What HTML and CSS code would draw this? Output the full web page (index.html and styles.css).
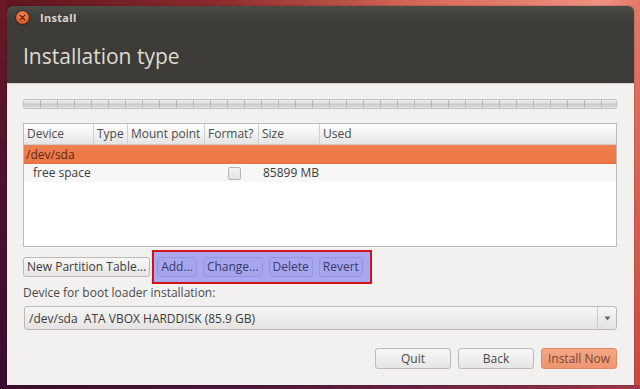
FILE: index.html
```html
<!DOCTYPE html>
<html>
<head>
<meta charset="utf-8">
<link rel="stylesheet" href="styles.css">
</head>
<body>
<div class="window">
  <div class="header">
    <div class="titlebar">
      <span class="close"><svg width="13" height="13" viewBox="0 0 13 13"><path d="M4.3 4.3 L8.7 8.7 M8.7 4.3 L4.3 8.7" stroke="#6b2410" stroke-width="1.4" stroke-linecap="round"/></svg></span>
      <span class="title">Install</span>
    </div>
    <h1 class="heading">Installation type</h1>
  </div>
  <div class="content">
    <div class="diskbar"></div>
    <div class="table">
      <div class="row head">
        <div class="cell">Device</div>
        <div class="cell">Type</div>
        <div class="cell">Mount point</div>
        <div class="cell">Format?</div>
        <div class="cell">Size</div>
        <div class="cell last">Used</div>
      </div>
      <div class="row selected">
        <div class="cell">/dev/sda</div>
        <div class="cell"></div>
        <div class="cell"></div>
        <div class="cell"></div>
        <div class="cell"></div>
        <div class="cell"></div>
      </div>
      <div class="row alt">
        <div class="cell indent">free space</div>
        <div class="cell"></div>
        <div class="cell"></div>
        <div class="cell center"><span class="check"></span></div>
        <div class="cell">85899 MB</div>
        <div class="cell"></div>
      </div>
    </div>
    <div class="actions">
      <button class="btn">New Partition Table...</button>
      <div class="highlight">
        <button class="btn hl">Add...</button>
        <button class="btn hl">Change...</button>
        <button class="btn hl">Delete</button>
        <button class="btn hl">Revert</button>
      </div>
    </div>
    <div class="label">Device for boot loader installation:</div>
    <div class="combo">
      <span class="combo-text">/dev/sda&nbsp; ATA VBOX HARDDISK (85.9 GB)</span>
      <span class="combo-arrow"><svg width="7" height="5" viewBox="0 0 7 5"><path d="M0.5 0.5 L6.5 0.5 L3.5 4.5 Z" fill="#6a6a6a"/></svg></span>
    </div>
    <div class="footer">
      <button class="btn big">Quit</button>
      <button class="btn big">Back</button>
      <button class="btn big primary">Install Now</button>
    </div>
  </div>
</div>
</body>
</html>
```

FILE: styles.css
```css
html, body {
  margin: 0;
  padding: 0;
}
body {
  width: 640px;
  height: 389px;
  overflow: hidden;
  font-family: "Open Sans", "DejaVu Sans", sans-serif;
  font-size: 12px;
  background: linear-gradient(100deg, #5c1420 0%, #8a2a2c 30%, #d86a58 60%, #f09282 85%, #c8483a 100%);
  position: relative;
}
body::before {
  content: "";
  position: absolute;
  left: 0; top: 0; bottom: 0; width: 7px;
  background: linear-gradient(180deg, #6a1a24 0%, #4a1230 50%, #3a0e2e 100%);
}
body::after {
  content: "";
  position: absolute;
  left: 0; right: 0; bottom: 0; height: 4px;
  background: linear-gradient(90deg, #3a0e2e 0%, #4e1838 40%, #7a2c48 80%, #a03a48 100%);
}
.window {
  position: relative;
  z-index: 1;
  margin: 6px 0 0 7px;
  width: 627px;
  height: 379px;
  border-radius: 6px 6px 0 0;
  overflow: hidden;
  display: flex;
  flex-direction: column;
  box-shadow: 0 0 2px rgba(0,0,0,0.4);
}
.header {
  height: 77px;
  background: linear-gradient(180deg, #4d4b45 0%, #3d3c38 18%, #3c3b37 100%);
  color: #dfdbd2;
  flex: none;
}
.titlebar {
  height: 22px;
  display: flex;
  align-items: center;
  padding-left: 9px;
}
.close {
  width: 13px;
  height: 13px;
  border-radius: 50%;
  background: radial-gradient(circle at 50% 35%, #f58a5a 0%, #e8642e 55%, #c8461a 100%);
  box-shadow: 0 0 0 1px rgba(40,20,10,0.5);
  display: inline-flex;
}
.title {
  margin-left: 11px;
  font-weight: bold;
  font-size: 11px;
  color: #dcd8cf;
  letter-spacing: 0.3px;
}
.heading {
  margin: 15px 0 0 16px;
  font-weight: normal;
  font-size: 21px;
  line-height: 26px;
  color: #dfdbd2;
}
.content {
  flex: 1;
  background: #f2f1f0;
  border-top: 1px solid #d6d3ce;
  padding: 15px 17px 0 16px;
  display: flex;
  flex-direction: column;
  color: #3c3c3c;
}
.diskbar {
  height: 10px;
  border-radius: 2px;
  border: 1px solid #c4c4c4;
  box-sizing: border-box;
  background:
    repeating-linear-gradient(90deg, transparent 0, transparent 16px, #b8b8b8 16px, #b8b8b8 17px),
    linear-gradient(180deg, #f0f0f0 0%, #dcdcdc 40%, #c8c8c8 60%, #e6e6e6 100%);
}
.table {
  margin-top: 14px;
  height: 124px;
  border: 1px solid #bcbab6;
  box-sizing: border-box;
  background: #ffffff;
}
.row {
  display: grid;
  grid-template-columns: 70px 34px 77px 54px 61px 1fr;
  height: 19px;
  align-items: center;
}
.row.head {
  height: 20px;
  background: linear-gradient(180deg, #ffffff 0%, #f2f2f2 50%, #e4e4e4 100%);
  border-bottom: 1px solid #cfcdc9;
  color: #4c4c4c;
}
.row.head .cell {
  border-right: 1px solid #d2d0cc;
  height: 20px;
  line-height: 20px;
  padding-left: 3px;
}
.row.head .cell.last { border-right: none; }
.cell {
  white-space: nowrap;
  overflow: hidden;
  padding-left: 2px;
  line-height: 18px;
}
.row.selected {
  background: linear-gradient(180deg, #f08050 0%, #ec7442 100%);
  color: #5a2814;
}
.row.alt {
  background: #f7f7f7;
  height: 18px;
}
.indent { padding-left: 9px; }
.center { display: flex; justify-content: center; }
.check {
  width: 11px;
  height: 11px;
  border: 1px solid #b6b6b6;
  border-radius: 2px;
  background: linear-gradient(180deg, #f4f4f4, #e2e2e2);
  margin-left: 2px;
}
.row.alt .cell:nth-child(5) { padding-left: 4px; }
.actions {
  display: flex;
  align-items: center;
  margin-top: 3px;
  gap: 2px;
}
.btn {
  font-family: inherit;
  font-size: 12px;
  color: #3c3c3c;
  height: 20px;
  padding: 0 3px;
  border: 1px solid #bdbab5;
  border-radius: 3px;
  background: linear-gradient(180deg, #f8f8f7 0%, #e6e5e3 100%);
  line-height: 18px;
}
.highlight {
  display: flex;
  align-items: center;
  gap: 6px;
  border: 2px solid #d2111f;
  background: #a9a8ef;
  padding: 5px 7px 5px 3px;
  height: 20px;
}
.btn.hl {
  background: #a7a6ec;
  border-color: #9896da;
  color: #3a3a6a;
}
.label {
  margin-top: 1px;
  line-height: 16px;
  color: #4a4a4a;
}
.combo {
  margin-top: 5px;
  height: 24px;
  box-sizing: border-box;
  margin-left: 1px;
  border: 1px solid #bdbab5;
  border-radius: 3px;
  background: linear-gradient(180deg, #f6f6f5 0%, #e4e3e1 100%);
  display: flex;
  align-items: center;
}
.combo-text { flex: 1; padding-left: 4px; color: #3c3c3c; }
.combo-arrow {
  width: 18px;
  height: 22px;
  border-left: 1px solid #cdcbc7;
  display: flex;
  align-items: center;
  justify-content: center;
}
.footer {
  margin-top: 18px;
  display: flex;
  justify-content: flex-end;
  gap: 7px;
}
.btn.big {
  width: 76px;
  height: 21px;
  font-size: 12px;
  color: #4a4a4a;
}
.btn.primary {
  background: linear-gradient(180deg, #f4a886 0%, #ee9470 100%);
  border-color: #e08a66;
  color: #7a4630;
}
```
